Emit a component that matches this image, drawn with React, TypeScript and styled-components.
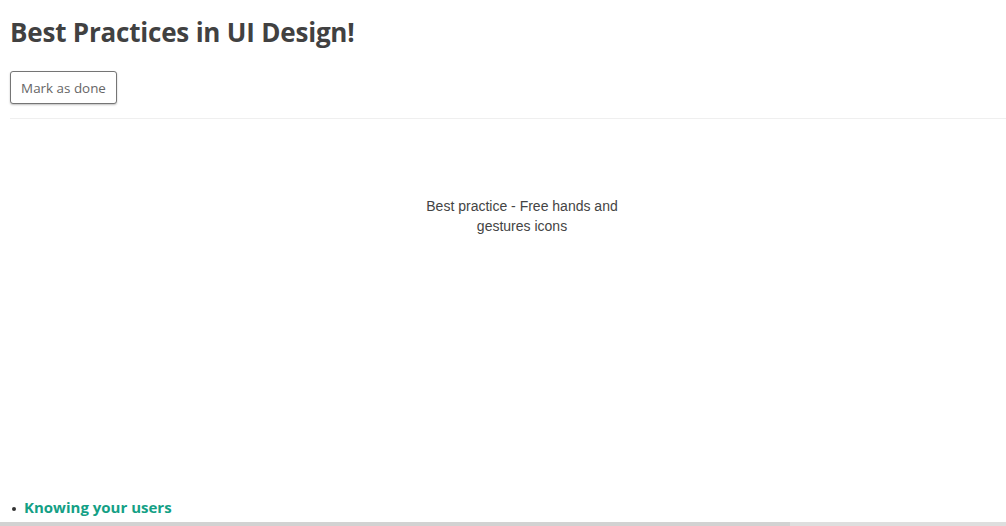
import React from "react";
import styled, { createGlobalStyle } from "styled-components";

const Global = createGlobalStyle`
  html, body { margin: 0; padding: 0; background: #fff; }
  body { font-family: "Open Sans", "Noto Sans", sans-serif; overflow: hidden; }
`;

const Page = styled.div`
  height: 526px;
  display: flex;
  flex-direction: column;
  overflow: hidden;
`;

const Content = styled.main`
  flex: 1;
  padding: 0 0 0 10px;
  display: flex;
  flex-direction: column;
`;

const Title = styled.h1`
  margin: 14px 0 0;
  font-size: 26px;
  line-height: 36px;
  font-weight: 700;
  color: #414141;
  letter-spacing: -0.2px;
`;

const DoneButton = styled.button`
  margin-top: 21px;
  align-self: flex-start;
  width: 107px;
  height: 33px;
  padding: 0;
  border: 1px solid #757575;
  border-radius: 3px;
  background: #fff;
  box-shadow: 0 1px 2px rgba(0, 0, 0, 0.25);
  font-family: "Open Sans", "Noto Sans", sans-serif;
  font-size: 13.4px;
  color: #666;
  cursor: pointer;
`;

const Divider = styled.hr`
  margin: 14px 0 0;
  border: 0;
  border-top: 1px solid #efefef;
`;

const Figure = styled.figure`
  margin: 0;
  height: 377px;
  display: flex;
  justify-content: center;
  padding-left: 28px;
`;

const Caption = styled.figcaption`
  margin-top: 77px;
  width: 204px;
  text-align: center;
  font-family: "Liberation Sans", Arial, sans-serif;
  font-size: 14px;
  line-height: 20px;
  color: #444;
`;

const TopicList = styled.ul`
  margin: 0;
  padding: 0;
  list-style: none;
`;

const Topic = styled.li`
  position: relative;
  padding-left: 14px;
  font-size: 15px;
  line-height: 22px;
  font-weight: 700;
  color: #14a085;
  &::before {
    content: "";
    position: absolute;
    left: 2px;
    top: 11px;
    width: 4px;
    height: 4px;
    border-radius: 50%;
    background: #333;
  }
`;

const ScrollTrack = styled.div`
  height: 4px;
  background: #dedede;
  display: flex;
`;

const ScrollThumb = styled.div`
  width: 790px;
  background: #d2d2d2;
`;

export default function App() {
  return (
    <>
      <Global />
      <Page>
        <Content>
          <Title>Best Practices in UI Design!</Title>
          <DoneButton>Mark as done</DoneButton>
          <Divider />
          <Figure>
            <Caption>Best practice - Free hands and gestures icons</Caption>
          </Figure>
          <TopicList>
            <Topic>Knowing your users</Topic>
          </TopicList>
        </Content>
        <ScrollTrack>
          <ScrollThumb />
        </ScrollTrack>
      </Page>
    </>
  );
}
